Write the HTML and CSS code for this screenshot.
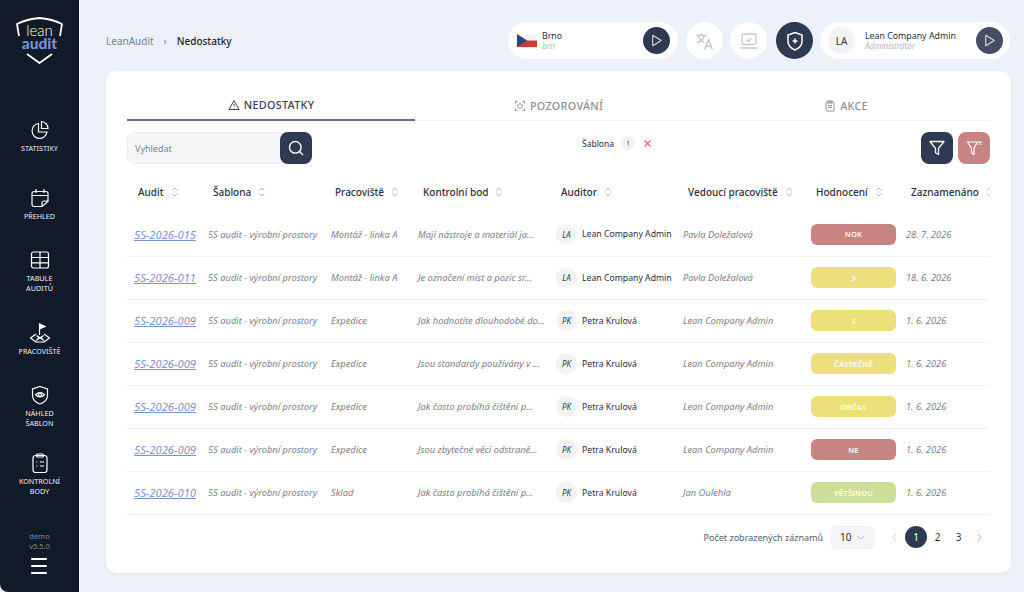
FILE: index.html
```html
<!DOCTYPE html>
<html lang="cs">
<head>
<meta charset="utf-8">
<title>Nedostatky</title>
<link rel="stylesheet" href="styles.css">
</head>
<body>
<svg class="defs" width="0" height="0">
  <symbol id="sort" viewBox="0 0 8 12"><path d="M1.500 4.500 4 2l2.500 2.500M1.500 7.500 4 10l2.500-2.500" fill="none" stroke="#b4b8c2" stroke-width="1"/></symbol>
  <symbol id="play" viewBox="0 0 16 16"><path d="M4 2.500v11l9-5.500z" fill="none" stroke="currentColor" stroke-width="1.200" stroke-linejoin="round"/></symbol>
</svg>
<aside class="sidebar">
  <div class="logo">
    <svg class="logo-shield" width="50" height="50" viewBox="0 0 50 50"><path d="M4 20 2 8Q12 3 24.500 2 37 3 47 8l-2 12M12 38l12.500 9L37 38" fill="none" stroke="#fff" stroke-width="1.800" stroke-linejoin="round"/></svg>
    <div class="logo-lean">lean</div>
    <div class="logo-audit">audit</div>
  </div>
  <nav class="nav">
    <a class="nav-item">
      <svg width="20" height="20" viewBox="0 0 20 20" fill="none" stroke="#fff" stroke-width="1.200"><path d="M8.500 3.500A7.500 7.500 0 1 0 17 12H8.500z"/><path d="M11.500 1.500A7 7 0 0 1 18 8.500h-6.500z"/></svg>
      <span>Statistiky</span>
    </a>
    <a class="nav-item">
      <svg width="20" height="20" viewBox="0 0 20 20" fill="none" stroke="#fff" stroke-width="1.200"><path d="M12 18.500H4a2 2 0 0 1-2-2v-11a2 2 0 0 1 2-2h12a2 2 0 0 1 2 2v8zM2 7.500h16M6 1v4M14 1v4M18 13h-4a2 2 0 0 0-2 2v3.500"/></svg>
      <span>Přehled</span>
    </a>
    <a class="nav-item">
      <svg width="20" height="20" viewBox="0 0 20 20" fill="none" stroke="#fff" stroke-width="1.200"><rect x="1.500" y="2" width="17" height="16" rx="2"/><path d="M1.500 7.500h17M1.500 12.800h17M10 2v16"/></svg>
      <span>Tabule<br>auditů</span>
    </a>
    <a class="nav-item">
      <svg width="22" height="20" viewBox="0 0 22 20" fill="none" stroke="#fff" stroke-width="1.200"><path d="M10.500 12V1l5.500 2.500-5.500 2.500" fill="#fff"/><path d="M7 11 1.500 15l5.500 4h8l5.500-4L15 11M7.500 12.500l7.500 5M14.500 12.500l-7.500 5M8.500 15h5" stroke-linejoin="round"/></svg>
      <span>Pracoviště</span>
    </a>
    <a class="nav-item">
      <svg width="20" height="20" viewBox="0 0 20 20" fill="none" stroke="#fff" stroke-width="1.200"><path d="M10 1.500 17.500 4v6.500c0 4-3 6.800-7.500 8.500-4.500-1.700-7.500-4.500-7.500-8.500V4z"/><path d="M5.500 9.800Q10 5.500 14.500 9.800 10 14 5.500 9.800z"/><circle cx="10" cy="9.800" r="1.500"/></svg>
      <span>Náhled<br>šablon</span>
    </a>
    <a class="nav-item">
      <svg width="20" height="20" viewBox="0 0 20 20" fill="none" stroke="#fff" stroke-width="1.200"><rect x="3" y="2.500" width="14" height="17" rx="2.500"/><rect x="6.500" y="1" width="7" height="3" rx="1"/><path d="M6.500 9h1M6.500 13h1M10 9h4M10 13h4"/></svg>
      <span>Kontrolní<br>body</span>
    </a>
  </nav>
  <div class="side-foot">
    <div class="version">demo<br>v5.5.0</div>
    <div class="burger"><i></i><i></i><i></i></div>
  </div>
</aside>
<div class="main">
  <header class="topbar">
    <div class="crumbs"><span class="crumb-root">LeanAudit</span><span class="crumb-sep">›</span><span class="crumb-cur">Nedostatky</span></div>
    <div class="top-actions">
      <div class="pill pill-loc">
        <svg class="flag" width="20" height="13" viewBox="0 0 20 13"><rect width="20" height="6.500" fill="#f4f4f6"/><rect y="6.500" width="20" height="6.500" fill="#cf3a30"/><path d="M0 0l10 6.500L0 13z" fill="#27477f"/></svg>
        <div class="pill-text"><b>Brno</b><em>brn</em></div>
        <span class="round-btn"><svg width="15" height="15"><use href="#play"/></svg></span>
      </div>
      <span class="circle">
        <svg width="20" height="20" viewBox="0 0 20 20" fill="none" stroke="#c3c7d2" stroke-width="1.300"><path d="M1.500 4.500h10M6.500 2v2.500M3 4.500c1 3.500 3.500 5.500 6.500 7M9.500 4.500c-1 3.500-3.500 5.500-7.500 7.500M9.500 18.500l4-10 4 10M11 15h5"/></svg>
      </span>
      <span class="circle">
        <svg width="20" height="20" viewBox="0 0 20 20" fill="none" stroke="#c3c7d2" stroke-width="1.300"><rect x="3" y="3" width="14" height="10.500" rx="1.500"/><path d="M1.500 17h17M7.500 8.500l2 1.800 3-3"/></svg>
      </span>
      <span class="circle circle-dark">
        <svg width="20" height="20" viewBox="0 0 20 20" fill="none" stroke="#fff" stroke-width="1.500"><path d="M10 1.500 17 4v6.500c0 4-3 6.800-7 8.500-4-1.700-7-4.500-7-8.500V4z"/><path d="M10 7.500v5M7.500 10h5"/></svg>
      </span>
      <div class="pill pill-user">
        <span class="avatar avatar-big">LA</span>
        <div class="pill-text"><b>Lean Company Admin</b><em>Administrátor</em></div>
        <span class="round-btn round-btn-soft"><svg width="15" height="15"><use href="#play"/></svg></span>
      </div>
    </div>
  </header>
  <section class="card">
    <div class="tabs">
      <div class="tab tab-on">
        <svg width="12" height="12" viewBox="0 0 12 12" fill="none" stroke="currentColor" stroke-width="1"><path d="M6 1.500 11 10.500H1zM6 5v2.500M6 8.800v.5"/></svg>NEDOSTATKY
      </div>
      <div class="tab">
        <svg width="12" height="12" viewBox="0 0 12 12" fill="none" stroke="currentColor" stroke-width="1"><path d="M1.500 3.500v-2h2M8.500 1.500h2v2M10.500 8.500v2h-2M3.500 10.500h-2v-2"/><circle cx="6" cy="6" r="2.300"/></svg>POZOROVÁNÍ
      </div>
      <div class="tab">
        <svg width="12" height="12" viewBox="0 0 12 12" fill="none" stroke="currentColor" stroke-width="1"><rect x="2" y="2" width="8" height="9" rx="1"/><rect x="4" y="1" width="4" height="2"/><path d="M4 5.500h4M4 7.500h4"/></svg>AKCE
      </div>
    </div>
    <div class="toolbar">
      <div class="search">
        <span class="search-text">Vyhledat</span>
        <span class="square-btn"><svg width="18" height="18" viewBox="0 0 18 18" fill="none" stroke="#fff" stroke-width="1.400"><circle cx="8.300" cy="8.300" r="5.800"/><path d="m12.500 12.500 3.500 3.500"/></svg></span>
      </div>
      <div class="chip"><span>Šablona</span><span class="chip-count">1</span><svg width="9" height="9" viewBox="0 0 9 9" stroke="#e8605c" stroke-width="1.100"><path d="M1.500 1.500l6 6M7.500 1.500l-6 6"/></svg></div>
      <div class="tool-btns">
        <span class="square-btn"><svg width="18" height="18" viewBox="0 0 18 18" fill="none" stroke="#fff" stroke-width="1.300"><path d="M2 2.500h14l-5.500 6.800v6.200l-3-1.800V9.300z" stroke-linejoin="round"/></svg></span>
        <span class="square-btn square-btn-red"><svg width="18" height="18" viewBox="0 0 18 18" fill="none" stroke="#fff" stroke-width="1.200"><path d="M2.500 3h10L9 9.300v6.200l-2.500-1.800V9.300zM13.500 2.500l3 3M16.500 2.500l-3 3" stroke-linejoin="round"/></svg></span>
      </div>
    </div>
    <div class="table-wrap">
    <table class="grid">
      <colgroup><col class="c1"><col class="c2"><col class="c3"><col class="c4"><col class="c5"><col class="c6"><col class="c7"><col class="c8"></colgroup>
      <thead>
        <tr>
          <th>Audit<svg class="s"><use href="#sort"/></svg></th>
          <th>Šablona<svg class="s"><use href="#sort"/></svg></th>
          <th class="th-tight">Pracoviště<svg class="s"><use href="#sort"/></svg></th>
          <th>Kontrolní bod<svg class="s"><use href="#sort"/></svg></th>
          <th>Auditor<svg class="s"><use href="#sort"/></svg></th>
          <th>Vedoucí pracoviště<svg class="s"><use href="#sort"/></svg></th>
          <th>Hodnocení<svg class="s"><use href="#sort"/></svg></th>
          <th>Zaznamenáno<svg class="s"><use href="#sort"/></svg></th>
        </tr>
      </thead>
      <tbody>
        <tr><td><a class="link">5S-2026-015</a></td><td>5S audit - výrobní prostory</td><td>Montáž - linka A</td><td>Mají nástroje a materiál ja...</td><td><div class="who"><span class="avatar">LA</span>Lean Company Admin</div></td><td>Pavla Doležalová</td><td><span class="badge red">NOK</span></td><td>28. 7. 2026</td></tr>
        <tr><td><a class="link">5S-2026-011</a></td><td>5S audit - výrobní prostory</td><td>Montáž - linka A</td><td>Je označení míst a pozic sr...</td><td><div class="who"><span class="avatar">LA</span>Lean Company Admin</div></td><td>Pavla Doležalová</td><td><span class="badge yellow">3</span></td><td>18. 6. 2026</td></tr>
        <tr><td><a class="link">5S-2026-009</a></td><td>5S audit - výrobní prostory</td><td>Expedice</td><td>Jak hodnotíte dlouhodobé do...</td><td><div class="who"><span class="avatar">PK</span>Petra Krulová</div></td><td>Lean Company Admin</td><td><span class="badge yellow">3</span></td><td>1. 6. 2026</td></tr>
        <tr><td><a class="link">5S-2026-009</a></td><td>5S audit - výrobní prostory</td><td>Expedice</td><td>Jsou standardy používány v ...</td><td><div class="who"><span class="avatar">PK</span>Petra Krulová</div></td><td>Lean Company Admin</td><td><span class="badge yellow">ČÁSTEČNĚ</span></td><td>1. 6. 2026</td></tr>
        <tr><td><a class="link">5S-2026-009</a></td><td>5S audit - výrobní prostory</td><td>Expedice</td><td>Jak často probíhá čištění p...</td><td><div class="who"><span class="avatar">PK</span>Petra Krulová</div></td><td>Lean Company Admin</td><td><span class="badge yellow">OBČAS</span></td><td>1. 6. 2026</td></tr>
        <tr><td><a class="link">5S-2026-009</a></td><td>5S audit - výrobní prostory</td><td>Expedice</td><td>Jsou zbytečné věci odstraně...</td><td><div class="who"><span class="avatar">PK</span>Petra Krulová</div></td><td>Lean Company Admin</td><td><span class="badge red">NE</span></td><td>1. 6. 2026</td></tr>
        <tr><td><a class="link">5S-2026-010</a></td><td>5S audit - výrobní prostory</td><td>Sklad</td><td>Jak často probíhá čištění p...</td><td><div class="who"><span class="avatar">PK</span>Petra Krulová</div></td><td>Jan Oulehla</td><td><span class="badge green">VĚTŠINOU</span></td><td>1. 6. 2026</td></tr>
      </tbody>
    </table>
    </div>
    <div class="pager">
      <span class="pager-label">Počet zobrazených záznamů</span>
      <span class="select">10<svg width="9" height="9" viewBox="0 0 9 9" fill="none" stroke="#b4b8c2"><path d="m1.500 3 3 3 3-3"/></svg></span>
      <div class="pages">
        <svg class="pg-arrow" width="7" height="9" viewBox="0 0 7 9" fill="none" stroke="#c9ccd4"><path d="M5 1 2 4.500 5 8"/></svg>
        <span class="pg pg-on">1</span><span class="pg">2</span><span class="pg">3</span>
        <svg class="pg-arrow" width="7" height="9" viewBox="0 0 7 9" fill="none" stroke="#a9adb8"><path d="m2 1 3 3.500L2 8"/></svg>
      </div>
    </div>
  </section>
</div>
</body>
</html>
```
FILE: styles.css
```css
* { box-sizing: border-box; }
html, body { margin: 0; height: 592px; overflow: hidden; }
body {
  display: flex;
  background: #edf1f9;
  font-family: "Noto Sans", "Liberation Sans", sans-serif;
  color: #1d2433;
}
.defs { position: absolute; }

/* sidebar */
.sidebar {
  width: 79px;
  flex: none;
  height: 592px;
  background: #101a29;
  border-radius: 0 0 0 8px;
  display: flex;
  flex-direction: column;
  align-items: center;
  color: #fff;
}
.logo {
  position: relative;
  width: 50px;
  height: 50px;
  margin-top: 16px;
  text-align: center;
  flex: none;
}
.logo-shield { position: absolute; left: 0; top: 0; }
.logo-lean {
  position: relative;
  font-family: "Lato", sans-serif;
  font-weight: 300;
  font-size: 15px;
  line-height: 14px;
  padding-top: 7px;
}
.logo-audit {
  position: relative;
  font-family: "Lato", sans-serif;
  font-weight: 900;
  font-size: 15.500px;
  line-height: 12px;
  color: #7392d4;
}
.nav { margin-top: 37px; width: 100%; }
.nav-item {
  height: 67.500px;
  display: flex;
  flex-direction: column;
  align-items: center;
  justify-content: center;
  gap: 3px;
}
.nav-item span {
  font-size: 7.200px;
  line-height: 10px;
  text-transform: uppercase;
  text-align: center;
  color: #eef0f4;
}
.side-foot {
  margin-top: auto;
  padding-bottom: 18px;
  display: flex;
  flex-direction: column;
  align-items: center;
  gap: 7px;
}
.version { font-size: 7.500px; line-height: 9.500px; color: #7f8795; text-align: center; }
.burger { display: flex; flex-direction: column; gap: 5px; width: 16px; }
.burger i { display: block; height: 2px; background: #fff; border-radius: 1px; }

/* main */
.main { flex: 1; min-width: 0; padding: 22px 13px 19px 27px; display: flex; flex-direction: column; }
.topbar { display: flex; align-items: center; justify-content: space-between; height: 37px; margin-bottom: 12px; }
.crumbs { display: flex; align-items: center; font-size: 10px; margin-top: 1px; }
.crumb-root { color: #7d828d; }
.crumb-sep { color: #7d828d; margin: 0 10px; }
.crumb-cur { font-weight: 500; color: #1d2433; }
.top-actions { display: flex; align-items: center; gap: 7px; margin-right: 1px; }
.pill { height: 37px; border-radius: 19px; background: #fff; display: flex; align-items: center; }
.pill-loc { width: 170px; padding: 0 8px 0 9px; margin-right: 1px; }
.pill-user { width: 190px; padding: 0 7px 0 8px; }
.flag { flex: none; margin-right: 5px; }
.pill-text { flex: 1; min-width: 0; display: flex; flex-direction: column; }
.pill-text b { font-weight: 400; font-size: 8.800px; line-height: 10px; color: #2a3040; }
.pill-text em { font-size: 8.200px; line-height: 10px; color: #b3b7c2; }
.pill-user .pill-text { padding-left: 10px; }
.round-btn {
  width: 27px; height: 27px; border-radius: 50%;
  background: #2d3a52; color: #d7dbe4;
  display: flex; align-items: center; justify-content: center;
  flex: none;
}
.round-btn-soft { background: #444f63; }
.circle {
  width: 37px; height: 37px; border-radius: 50%; background: #fff;
  display: flex; align-items: center; justify-content: center; flex: none;
}
.circle-dark { background: #2d3a52; margin: 0 0 0 2px; }
.avatar {
  width: 21px; height: 21px; border-radius: 50%; background: #f3f3f5;
  display: inline-flex; align-items: center; justify-content: center;
  font-size: 8px; font-style: italic; color: #333a48; flex: none;
}
.avatar-big { width: 27px; height: 27px; font-size: 10px; font-style: normal; }

/* card */
.card {
  flex: 1;
  background: #fff;
  border-radius: 10px;
  padding: 19px 21px 0;
  box-shadow: 0 1px 3px rgba(40, 50, 80, .08);
  min-height: 0;
}
.tabs { display: grid; grid-template-columns: 288px 1fr 288px; height: 31px; border-bottom: 1px solid #f1f2f5; }
.tab {
  display: flex; align-items: center; justify-content: center; gap: 4px;
  font-size: 10.800px; font-weight: 500; color: #8a909c; letter-spacing: .3px;
  height: 31px;
}
.tab-on { color: #3a4253; border-bottom: 2px solid #62718f; }
.toolbar { display: flex; align-items: flex-start; margin-top: 11px; height: 32px; }
.search {
  width: 185px; height: 32px; display: flex; align-items: center; justify-content: space-between;
  background: #f6f6f8; border: 1px solid #eceef3; border-radius: 7px; flex: none;
}
.search-text { padding-left: 7px; font-size: 9px; color: #80848f; }
.square-btn {
  width: 32px; height: 32px; border-radius: 8px; background: #2d3a52;
  display: flex; align-items: center; justify-content: center; flex: none;
}
.search .square-btn { margin: -1px; }
.square-btn-red { background: #c88482; }
.chip { display: flex; align-items: center; gap: 7px; margin: 4px 0 0 270px; font-size: 8.500px; color: #2a3040; height: 14px; }
.chip-count {
  width: 14px; height: 14px; border-radius: 50%; background: #f0f1f5;
  display: flex; align-items: center; justify-content: center; font-size: 7.500px; color: #555c6b;
}
.chip svg { margin-left: 1px; }
.tool-btns { margin-left: auto; display: flex; gap: 5px; }

/* table */
.table-wrap { margin-top: 6px; overflow: hidden; }
.grid { table-layout: fixed; border-collapse: collapse; width: 863px; }
.c1 { width: 74px; } .c2 { width: 123px; } .c3 { width: 87px; } .c4 { width: 138px; }
.c5 { width: 127px; } .c6 { width: 128px; } .c7 { width: 95px; } .c8 { width: 91px; }
th {
  height: 43px; text-align: left; font-weight: 500; font-size: 10px; color: #2a3040;
  padding: 0 0 0 12px; white-space: nowrap;
}
th:first-child, .grid .th-tight { padding-left: 11px; }
.s { width: 8px; height: 12px; margin-left: 7px; vertical-align: -2px; }
td {
  height: 43px; padding: 0 0 0 7px; border-bottom: 1px solid #f0f1f4;
  font-size: 9.300px; font-style: italic; color: #7d8088; white-space: nowrap; overflow: hidden;
}
.link { font-size: 11.200px; color: #7b93cf; text-decoration: underline; }
.who { display: flex; align-items: center; gap: 5px; font-size: 8.700px; font-style: normal; color: #2a3040; }
.badge {
  display: flex; align-items: center; justify-content: center;
  width: 85px; height: 21px; border-radius: 6px;
  font-size: 7.500px; font-style: normal; font-weight: 600; color: #fff; letter-spacing: .2px;
}
.red { background: #c88482; }
.yellow { background: #ede07a; }
.green { background: #cbdf98; }

/* pager */
.pager { display: flex; align-items: center; justify-content: flex-end; height: 23px; margin-top: 11px; }
.pager-label { font-size: 9px; color: #555c6b; margin-right: 8px; }
.select {
  width: 43px; height: 23px; border: 1px solid #eeeff3; border-radius: 5px; background: #f6f6f8;
  display: flex; align-items: center; justify-content: space-between; padding: 0 8px;
  font-size: 10px; color: #2a3040;
}
.pages { display: flex; align-items: center; margin-left: 17px; }
.pg { width: 21px; height: 21px; display: flex; align-items: center; justify-content: center; font-size: 10px; color: #2a3040; }
.pg-on { width: 22px; height: 22px; border-radius: 50%; background: #2d3a52; color: #fff; }
.pg-arrow { margin: 0 7px; }
.pg-arrow:first-child { margin: 0 7px 0 0; }
.pg-arrow:last-child { margin: 0 7px 0 7px; }
```
